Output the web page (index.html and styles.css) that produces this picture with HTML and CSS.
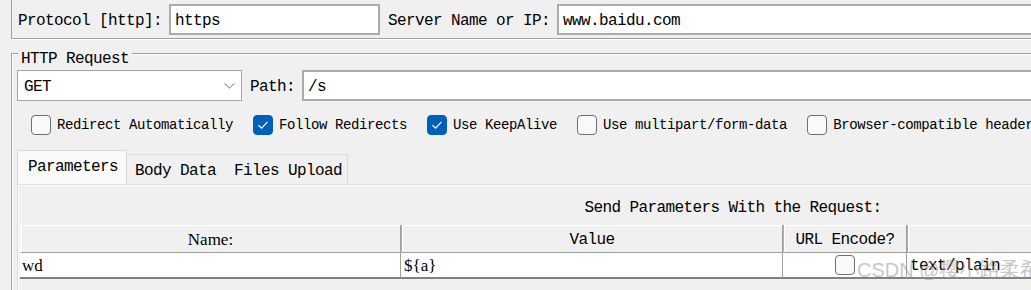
FILE: index.html
```html
<!DOCTYPE html>
<html>
<head>
<meta charset="utf-8">
<link rel="stylesheet" href="styles.css">
</head>
<body>
<div class="page">
  <div class="top-panel">
    <span class="lbl">Protocol [http]:</span>
    <div class="field proto">https</div>
    <span class="lbl">Server Name or IP:</span>
    <div class="field grow">www.baidu.com</div>
  </div>

  <div class="group">
    <span class="legend">HTTP Request</span>
    <div class="path-row">
      <div class="combo">
        <span>GET</span>
        <svg class="chev" width="11" height="6" viewBox="0 0 11 6"><path d="M0.5 0.5 L5.5 5 L10.5 0.5" fill="none" stroke="#6a6a6a" stroke-width="1"/></svg>
      </div>
      <span class="lbl">Path:</span>
      <div class="field grow">/s</div>
    </div>

    <div class="checks">
      <div class="check"><span class="box"></span><span>Redirect Automatically</span></div>
      <div class="check"><span class="box on"><svg width="18" height="18" viewBox="0 0 18 18"><path d="M4.5 9.2 L7.6 12.2 L13.5 5.8" fill="none" stroke="#fff" stroke-width="1.2"/></svg></span><span>Follow Redirects</span></div>
      <div class="check"><span class="box on"><svg width="18" height="18" viewBox="0 0 18 18"><path d="M4.5 9.2 L7.6 12.2 L13.5 5.8" fill="none" stroke="#fff" stroke-width="1.2"/></svg></span><span>Use KeepAlive</span></div>
      <div class="check"><span class="box"></span><span>Use multipart/form-data</span></div>
      <div class="check"><span class="box"></span><span>Browser-compatible headers</span></div>
    </div>

    <div class="tabs">
      <div class="tab active">Parameters</div>
      <div class="tab-strip">
        <div class="tab">Body Data</div>
        <div class="tab">Files Upload</div>
      </div>
    </div>

    <div class="tab-panel">
      <div class="panel-inner">
        <div class="caption">Send Parameters With the Request:</div>
        <div class="table">
          <div class="th serif">Name:</div>
          <div class="th">Value</div>
          <div class="th">URL Encode?</div>
          <div class="th"></div>
          <div class="td serif">wd</div>
          <div class="td serif">${a}</div>
          <div class="td center"><span class="box"></span></div>
          <div class="td">text/plain</div>
        </div>
      </div>
    </div>
  </div>

  <div class="watermark">CSDN @樱小路柔希</div>
</div>
</body>
</html>
```

FILE: styles.css
```css
* { box-sizing: border-box; }

body {
  margin: 0;
  width: 1031px;
  height: 290px;
  overflow: hidden;
  background: #f0f0f0;
  color: #000;
  font-family: "Liberation Mono", monospace;
  font-size: 16px;
  letter-spacing: -0.6px;
}

.page {
  position: relative;
  width: 1460px;
  height: 290px;
}

.top-panel {
  margin-left: 11px;
  height: 39px;
  padding: 4px 0 3px 6px;
  border-left: 1px solid #a0a0a0;
  border-bottom: 1px solid #a0a0a0;
  box-shadow: 0 1px 0 #fff;
  display: flex;
  align-items: center;
  gap: 7px;
}

.lbl {
  white-space: nowrap;
  line-height: 20px;
  padding-top: 3px;
}

.field {
  height: 31px;
  border: 2px solid #ababab;
  background: #fff;
  padding: 3px 0 0 4px;
  display: flex;
  align-items: center;
  white-space: nowrap;
}

.proto { width: 211px; margin-right: 1px; }
.grow { flex: 1; }

.group {
  position: relative;
  margin: 14px 0 0 11px;
  height: 260px;
  padding: 16px 0 0 5px;
  border-top: 1px solid #a0a0a0;
  border-left: 1px solid #a0a0a0;
  box-shadow: inset 1px 1px 0 #fff;
}

.legend {
  position: absolute;
  left: 6px;
  top: -5px;
  padding: 0 3px;
  line-height: 20px;
  background: #f0f0f0;
}

.path-row {
  display: flex;
  align-items: center;
  height: 31px;
}

.combo {
  width: 225px;
  height: 31px;
  border: 1px solid #a3a3a3;
  background: #fff;
  padding: 2px 6px 0 6px;
  display: flex;
  align-items: center;
  justify-content: space-between;
  margin-right: 8px;
}

.path-row .lbl { margin-right: 7px; }

.chev { display: block; margin-top: -2px; }

.checks {
  display: flex;
  align-items: center;
  gap: 20px;
  height: 20px;
  margin-top: 14px;
  padding-left: 14px;
  font-size: 14px;
  letter-spacing: -0.4px;
  white-space: nowrap;
}

.check {
  display: flex;
  align-items: center;
  gap: 6px;
  line-height: 20px;
}

.box {
  display: inline-flex;
  align-items: center;
  justify-content: center;
  width: 20px;
  height: 20px;
  flex: none;
  border: 1px solid #6f6f6f;
  border-radius: 4px;
  background: #f9f9f9;
}

.box.on {
  background: #005fb8;
  border-color: #005fb8;
}

.tabs {
  display: flex;
  align-items: flex-end;
  height: 34px;
  margin-top: 15px;
}

.tab {
  line-height: 20px;
  white-space: nowrap;
}

.tab.active {
  height: 34px;
  padding: 6px 8px 0 10px;
  background: #f9f9f9;
  border: 1px solid #d9d9d9;
  border-bottom: none;
}

.tab-strip {
  display: flex;
  align-items: center;
  gap: 18px;
  height: 30px;
  padding: 2px 5px 0 8px;
  border-top: 1px solid #dadada;
  border-right: 1px solid #dadada;
}

.tab-panel {
  border-top: 1px solid #dcdcdc;
  border-left: 1px solid #dcdcdc;
  box-shadow: inset 1px 1px 0 #fafafa;
  padding-left: 2px;
  height: 120px;
}

.panel-inner { width: 1426px; }

.caption {
  margin-top: 13px;
  line-height: 20px;
  text-align: center;
}

.table {
  margin-top: 7px;
  display: grid;
  grid-template-columns: 381px 382px 124px 539px;
  grid-template-rows: 28px 26px;
}

.th {
  display: flex;
  align-items: center;
  justify-content: center;
  padding-top: 3px;
  background: #f0f0f0;
  border-left: 1px solid #b0b0b0;
  border-right: 1px solid #a0a0a0;
  border-bottom: 1px solid #a0a0a0;
  box-shadow: inset 1px 1px 0 #fff;
}

.th:first-child { border-left: 1px solid #fff; }

.td {
  display: flex;
  align-items: center;
  background: #fff;
  padding: 2px 0 0 3px;
  border-right: 1px solid #a0a0a0;
  border-bottom: 2px solid #808080;
  white-space: nowrap;
}

.td:nth-child(5) { padding-left: 2px; }

.td.center { justify-content: center; padding: 0; }

.serif {
  font-family: "Liberation Serif", serif;
  font-size: 17px;
  letter-spacing: 0;
}

.watermark {
  position: absolute;
  left: 857px;
  top: 257px;
  font-family: "Liberation Sans", "Noto Sans CJK SC", sans-serif;
  font-size: 20px;
  letter-spacing: 0;
  line-height: 26px;
  color: rgba(150, 150, 150, 0.55);
  white-space: nowrap;
}
```
